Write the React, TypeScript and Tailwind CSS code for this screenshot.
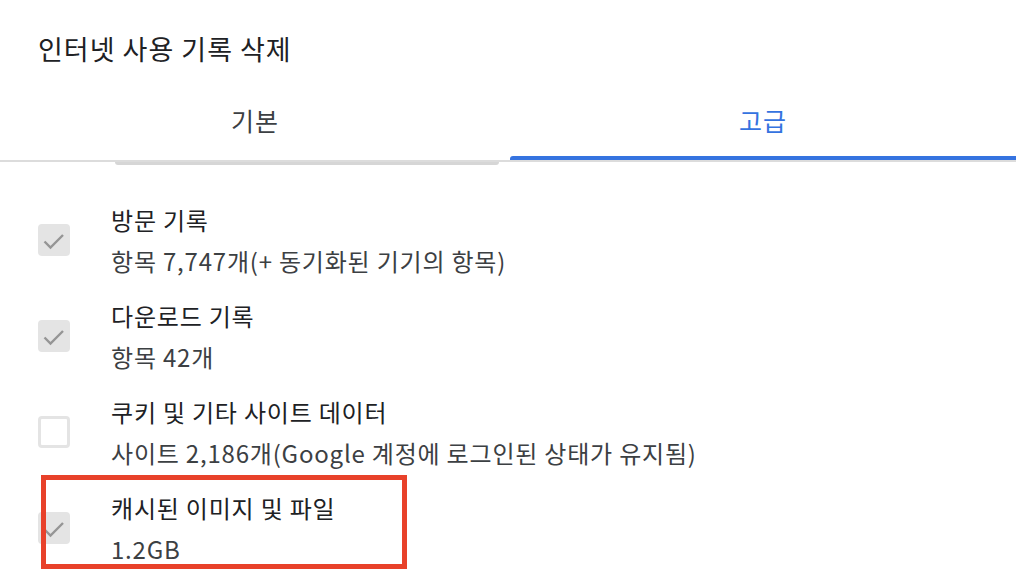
import React from "react";

const items = [
  { title: "방문 기록", sub: "항목 7,747개(+ 동기화된 기기의 항목)", checked: true },
  { title: "다운로드 기록", sub: "항목 42개", checked: true },
  { title: "쿠키 및 기타 사이트 데이터", sub: "사이트 2,186개(Google 계정에 로그인된 상태가 유지됨)", checked: false },
  { title: "캐시된 이미지 및 파일", sub: "1.2GB", checked: true, highlight: true },
];

function Check({ checked }: { checked: boolean }) {
  if (!checked) {
    return <div className="w-8 h-8 rounded-[4px] border-[3px] border-[#e4e4e4] bg-white shrink-0" />;
  }
  return (
    <div className="w-8 h-8 rounded-[4px] bg-[#e4e4e4] shrink-0">
      <svg width="32" height="32" viewBox="0 0 32 32" fill="none">
        <path d="M6.5 17.5L12.5 23.5L25 11" stroke="#959595" strokeWidth="2.4" />
      </svg>
    </div>
  );
}

export default function App() {
  return (
    <div
      className="w-[1016px] h-[583px] bg-white overflow-hidden text-[#202124]"
      style={{ fontFamily: '"Noto Sans CJK KR", "Noto Sans", sans-serif' }}
    >
      {/* Title */}
      <h1 className="pl-[38px] pt-[29px] text-[27px] leading-[40px] tracking-[1px] h-[84px]">인터넷 사용 기록 삭제</h1>

      {/* Tabs */}
      <div className="relative">
        <div className="flex h-[76px]">
          <div className="w-[510px] flex items-center justify-center text-[25px] tracking-[1px] text-[#3c4043] pb-[2px]">기본</div>
          <div className="flex-1 flex items-center justify-center text-[25px] tracking-[1px] text-[#3573e0] pb-[2px]">고급</div>
        </div>
        <div className="h-[2px] bg-[#dcdcdc]" />
        <div className="absolute left-[510px] right-0 bottom-[2px] h-[4px] bg-[#3573e0] rounded-tl-[3px]" />
        <div className="absolute left-[115px] w-[384px] top-[78px] h-[3px] bg-[#d6d6d6] rounded-b-full" />
      </div>

      {/* Items */}
      <div className="pt-[30px] flex flex-col">
        {items.map((it) => (
          <div key={it.title} className="relative flex items-center h-[96px]">
            <div className="w-[111px] pl-[38px] flex items-center">
              <Check checked={it.checked} />
            </div>
            <div className="flex flex-col tracking-[0.8px]">
              <div className="text-[24px] leading-[41px] text-[#202124]">{it.title}</div>
              <div className="text-[24px] leading-[41px] text-[#3c4043]">{it.sub}</div>
            </div>
            {it.highlight && (
              <div className="absolute left-[41px] top-[-5px] w-[366px] h-[94px] border-[5px] border-[#e8412a]" />
            )}
          </div>
        ))}
      </div>
    </div>
  );
}
